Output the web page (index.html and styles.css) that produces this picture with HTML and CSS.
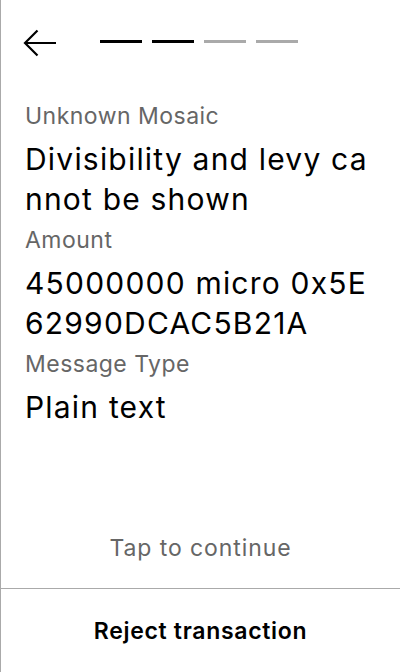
FILE: index.html
```html
<!DOCTYPE html>
<html>
<head>
<meta charset="utf-8">
<link rel="stylesheet" href="styles.css">
</head>
<body>
<div class="screen">
  <header class="header">
    <button class="back" aria-label="Back">
      <svg width="34" height="28" viewBox="0 0 34 28"><path d="M33 14H2M14.5 1.5L2 14L14.5 26.5" fill="none" stroke="#000" stroke-width="2.2"/></svg>
    </button>
    <div class="steps">
      <span class="step done"></span>
      <span class="step done"></span>
      <span class="step"></span>
      <span class="step"></span>
    </div>
  </header>
  <main class="content">
    <div class="field">
      <div class="label">Unknown Mosaic</div>
      <div class="value">Divisibility and levy cannot be shown</div>
    </div>
    <div class="field">
      <div class="label">Amount</div>
      <div class="value">45000000 micro 0x5E62990DCAC5B21A</div>
    </div>
    <div class="field">
      <div class="label">Message Type</div>
      <div class="value">Plain text</div>
    </div>
  </main>
  <div class="tap">Tap to continue</div>
  <footer class="footer">
    <button class="reject">Reject transaction</button>
  </footer>
</div>
</body>
</html>
```
FILE: styles.css
```css
html, body {
  margin: 0;
  padding: 0;
  background: #fff;
}
.screen {
  width: 400px;
  height: 672px;
  box-sizing: border-box;
  border-left: 1px solid #aaa;
  display: flex;
  flex-direction: column;
  font-family: Inter, "Noto Sans", sans-serif;
  color: #000;
  letter-spacing: 0.03em;
}
.header {
  display: flex;
  align-items: center;
  height: 86px;
  padding: 0 0 0 22px;
  box-sizing: border-box;
  flex: none;
}
.back {
  border: 0;
  background: none;
  padding: 0;
  width: 34px;
  height: 28px;
  display: block;
}
.back svg { display: block; }
.steps {
  display: flex;
  gap: 10px;
  margin-left: 43px;
  margin-top: -3px;
}
.step {
  width: 42px;
  height: 3px;
  background: #aaa;
}
.step.done { background: #000; }
.content {
  padding: 16px 24px 0 24px;
  flex: 1;
  display: flex;
  flex-direction: column;
  gap: 7px;
}
.field { display: flex; flex-direction: column; }
.label {
  font-size: 23px;
  line-height: 28px;
  color: #666;
}
.value {
  font-size: 30px;
  line-height: 40px;
  letter-spacing: 0.04em;
  margin-top: 9px;
  word-break: break-all;
}
.tap {
  text-align: center;
  font-size: 23px;
  line-height: 28px;
  letter-spacing: 0.04em;
  color: #666;
  margin-bottom: 26px;
  flex: none;
}
.footer {
  border-top: 1px solid #aaa;
  height: 84px;
  box-sizing: border-box;
  display: flex;
  align-items: center;
  justify-content: center;
  flex: none;
}
.reject {
  border: 0;
  background: none;
  font-family: Inter, "Noto Sans", sans-serif;
  font-size: 23px;
  letter-spacing: 0.03em;
  font-weight: 600;
  color: #000;
  padding: 0;
}
```
